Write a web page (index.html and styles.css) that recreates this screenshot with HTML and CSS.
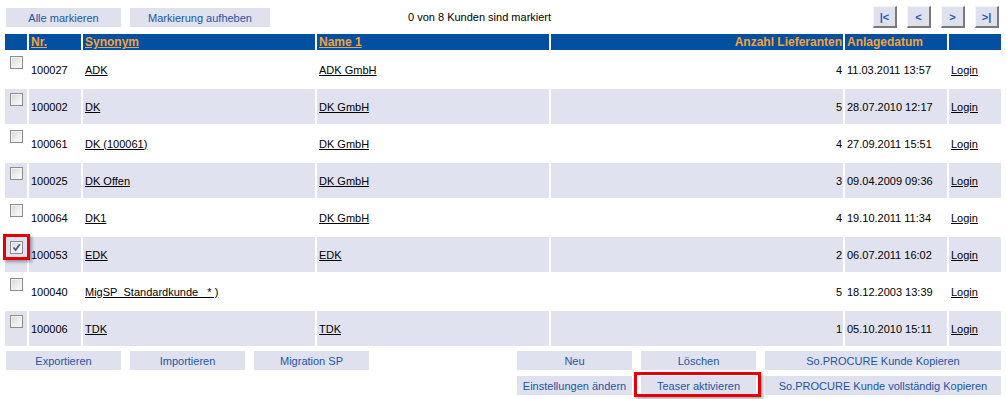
FILE: index.html
```html
<!DOCTYPE html>
<html lang="de">
  <head>
    <meta charset="UTF-8" />
    <title>Kundenliste</title>
    <link rel="stylesheet" href="styles.css">
  </head>
  <body>
    <div class="topbar">
      <div class="btn-group">
        <button class="btn w115">Alle markieren</button>
        <button class="btn w140">Markierung aufheben</button>
      </div>
      <span class="count">0 von 8 Kunden sind markiert</span>
      <div class="pager">
        <button class="pg">|&lt;</button>
        <button class="pg">&lt;</button>
        <button class="pg">&gt;</button>
        <button class="pg">&gt;|</button>
      </div>
    </div>

    <table class="list">
      <colgroup>
        <col style="width: 22px" />
        <col style="width: 52px" />
        <col style="width: 232px" />
        <col style="width: 232px" />
        <col style="width: 292px" />
        <col style="width: 102px" />
        <col style="width: 52px" />
      </colgroup>
      <thead>
        <tr>
          <th></th>
          <th><a href="#">Nr.</a></th>
          <th><a href="#">Synonym</a></th>
          <th><a href="#">Name 1</a></th>
          <th class="num">Anzahl Lieferanten</th>
          <th>Anlagedatum</th>
          <th></th>
        </tr>
      </thead>
      <tbody>
        <tr>
          <td class="sel"><span class="cb"></span></td>
          <td>100027</td>
          <td><a href="#">ADK</a></td>
          <td><a href="#">ADK GmbH</a></td>
          <td class="num">4</td>
          <td>11.03.2011 13:57</td>
          <td><a href="#">Login</a></td>
        </tr>
        <tr class="alt">
          <td class="sel"><span class="cb"></span></td>
          <td>100002</td>
          <td><a href="#">DK</a></td>
          <td><a href="#">DK GmbH</a></td>
          <td class="num">5</td>
          <td>28.07.2010 12:17</td>
          <td><a href="#">Login</a></td>
        </tr>
        <tr>
          <td class="sel"><span class="cb"></span></td>
          <td>100061</td>
          <td><a href="#">DK (100061)</a></td>
          <td><a href="#">DK GmbH</a></td>
          <td class="num">4</td>
          <td>27.09.2011 15:51</td>
          <td><a href="#">Login</a></td>
        </tr>
        <tr class="alt">
          <td class="sel"><span class="cb"></span></td>
          <td>100025</td>
          <td><a href="#">DK Offen</a></td>
          <td><a href="#">DK GmbH</a></td>
          <td class="num">3</td>
          <td>09.04.2009 09:36</td>
          <td><a href="#">Login</a></td>
        </tr>
        <tr>
          <td class="sel"><span class="cb"></span></td>
          <td>100064</td>
          <td><a href="#">DK1</a></td>
          <td><a href="#">DK GmbH</a></td>
          <td class="num">4</td>
          <td>19.10.2011 11:34</td>
          <td><a href="#">Login</a></td>
        </tr>
        <tr class="alt">
          <td class="sel">
            <span class="cb checked">
              <svg width="11" height="11" viewBox="0 0 11 11"><path d="M2.5 5.5 L4.6 8 L8.8 2.2" fill="none" stroke="#4a5f9c" stroke-width="1.8" /></svg>
            </span>
            <span class="mark mark-cb"></span>
          </td>
          <td>100053</td>
          <td><a href="#">EDK</a></td>
          <td><a href="#">EDK</a></td>
          <td class="num">2</td>
          <td>06.07.2011 16:02</td>
          <td><a href="#">Login</a></td>
        </tr>
        <tr>
          <td class="sel"><span class="cb"></span></td>
          <td>100040</td>
          <td><a href="#">MigSP_Standardkunde_ * )</a></td>
          <td></td>
          <td class="num">5</td>
          <td>18.12.2003 13:39</td>
          <td><a href="#">Login</a></td>
        </tr>
        <tr class="alt">
          <td class="sel"><span class="cb"></span></td>
          <td>100006</td>
          <td><a href="#">TDK</a></td>
          <td><a href="#">TDK</a></td>
          <td class="num">1</td>
          <td>05.10.2010 15:11</td>
          <td><a href="#">Login</a></td>
        </tr>
      </tbody>
    </table>

    <div class="bottombar">
      <div class="btn-group">
        <button class="btn w115">Exportieren</button>
        <button class="btn w115">Importieren</button>
        <button class="btn w115">Migration SP</button>
      </div>
      <div class="btn-grid">
        <button class="btn">Neu</button>
        <button class="btn">Löschen</button>
        <button class="btn">So.PROCURE Kunde Kopieren</button>
        <button class="btn">Einstellungen ändern</button>
        <div class="hl">
          <button class="btn">Teaser aktivieren</button>
          <span class="mark mark-btn"></span>
        </div>
        <button class="btn">So.PROCURE Kunde vollständig Kopieren</button>
      </div>
    </div>
  </body>
</html>
```

FILE: styles.css
```css
body {
  margin: 0;
  width: 1006px;
  height: 399px;
  font-family: "Liberation Sans", Arial, Helvetica, sans-serif;
  font-size: 11px;
  color: #000;
  background: #fff;
  overflow: hidden;
}

button {
  font-family: inherit;
  font-size: 11px;
}

.btn {
  display: block;
  height: 19px;
  padding: 0;
  border: none;
  background-color: #dfe1ef;
  color: #1d55a8;
  text-align: center;
  white-space: nowrap;
}

.w115 {
  width: 115px;
}

.w140 {
  width: 140px;
}

.btn-group {
  display: flex;
  gap: 9px;
}

/* top bar */
.topbar {
  display: flex;
  align-items: flex-start;
  height: 32px;
  padding: 0 7px 0 6px;
  box-sizing: border-box;
}

.topbar .btn-group {
  margin-top: 8px;
}

.count {
  margin-left: 138px;
  margin-top: 8px;
  line-height: 19px;
  font-size: 11px;
}

.pager {
  display: flex;
  gap: 10px;
  margin-left: auto;
  margin-top: 6px;
}

.pg {
  width: 24px;
  height: 22px;
  padding: 0;
  box-sizing: border-box;
  background-color: #dfe1ef;
  border-top: 1px solid #f4f5fa;
  border-left: 1px solid #f4f5fa;
  border-right: 2px solid #7a7a7a;
  border-bottom: 2px solid #7a7a7a;
  color: #1f5cc0;
  font-weight: bold;
  font-size: 11px;
  line-height: 18px;
}

/* list */
.list {
  margin-left: 3px;
  width: 1000px;
  table-layout: fixed;
  border-collapse: separate;
  border-spacing: 2px;
}

.list th {
  height: 16px;
  padding: 0 2px;
  background-color: #034fa0;
  color: #f2a33a;
  font-size: 12px;
  font-weight: bold;
  text-align: left;
  white-space: nowrap;
}

.list th a {
  color: #f2a33a;
}

.list td {
  height: 35px;
  padding: 0 1px 0 2px;
  vertical-align: middle;
  white-space: nowrap;
}

.list .num {
  text-align: right;
  padding-right: 1px;
}

.list tr.alt td {
  background-color: #e0e2f0;
}

.list a {
  color: #000;
}

.list td.sel {
  position: relative;
  height: 31px;
  vertical-align: top;
  padding: 4px 0 0 5px;
}

.cb {
  display: block;
  width: 13px;
  height: 13px;
  box-sizing: border-box;
  border: 1px solid #8d8d8d;
  background: linear-gradient(135deg, #d4d4d4 0%, #ececec 50%, #fdfdfd 100%);
  box-shadow: inset 0 0 0 1px #f2f2f2;
}

.cb svg {
  display: block;
  margin: 0;
}

.mark {
  position: absolute;
  box-sizing: border-box;
  border: 3px solid #e3000b;
  box-shadow: 2px 2px 3px rgba(0, 0, 0, 0.35);
}

.mark-cb {
  left: -2px;
  top: -3px;
  width: 27px;
  height: 26px;
}

/* bottom bar */
.bottombar {
  display: flex;
  justify-content: space-between;
  align-items: flex-start;
  margin-top: 3px;
  padding: 0 5px 0 6px;
}

.btn-grid {
  display: grid;
  grid-template-columns: 115px 115px 236px;
  column-gap: 9px;
  row-gap: 6px;
}

.btn-grid .btn {
  width: 100%;
}

.hl {
  position: relative;
}

.mark-btn {
  left: -7px;
  top: -4px;
  width: 127px;
  height: 25px;
}
```
